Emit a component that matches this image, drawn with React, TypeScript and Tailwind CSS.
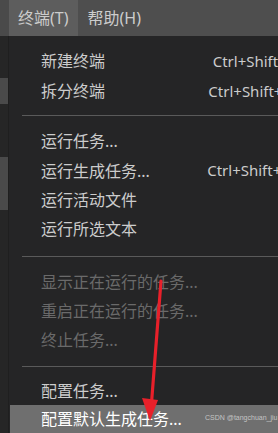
import React from "react";

const font = { fontFamily: '"Noto Sans", "Noto Sans CJK SC", sans-serif' };

type Item = { label: string; shortcut?: string; disabled?: boolean; active?: boolean; h: string };

function Row({ label, shortcut, disabled, active, h }: Item) {
  return (
    <div
      className={`flex items-center justify-between pl-[31px] pr-[18px] text-[16px] leading-none whitespace-nowrap ${h} ${
        active ? "bg-[#6f6f6f] text-white" : disabled ? "text-[#6a6a6a]" : "text-[#cccccc]"
      }`}
    >
      <span>{label}</span>
      {shortcut && <span className="text-[15px]">{shortcut}</span>}
    </div>
  );
}

function Sep({ pad }: { pad: string }) {
  return (
    <div className={`pl-[12px] ${pad}`}>
      <div className="h-px bg-[#5a5a5a]" />
    </div>
  );
}

export default function App() {
  return (
    <div className="relative w-[278px] h-[433px] overflow-hidden bg-[#252526]" style={font}>
      {/* top menubar */}
      <div className="flex h-[36px] bg-[#4e4e4e] text-[#cccccc] text-[16px]">
        <div className="w-[9px] shrink-0 bg-[#4a4a4a]" />
        <div className="flex items-center px-[9px] bg-[#5d5d5d]">终端(T)</div>
        <div className="flex items-center px-[10px]">帮助(H)</div>
      </div>
      <div className="flex h-[397px]">
        {/* left strip */}
        <div className="w-[9px] shrink-0 flex flex-col bg-[#262626] border-r border-[#1f1f1f]">
          <div className="h-[42px]" />
          <div className="h-[26px] bg-[#4a4a4a]" />
          <div className="h-[53px]" />
          <div className="h-[53px] bg-[#4a4a4a]" />
        </div>
        {/* menu */}
        <div className="w-[300px] shrink-0 pl-px pt-[10px] bg-[#252526]">
          <Row label="新建终端" shortcut="Ctrl+Shift+`" h="h-[30px]" />
          <Row label="拆分终端" shortcut="Ctrl+Shift+5" h="h-[30px]" />
          <Sep pad="pt-[9px] pb-[10px]" />
          <Row label="运行任务..." h="h-[30px]" />
          <Row label="运行生成任务..." shortcut="Ctrl+Shift+B" h="h-[29px]" />
          <Row label="运行活动文件" h="h-[29px]" />
          <Row label="运行所选文本" h="h-[29px]" />
          <Sep pad="pt-[13px] pb-[10px]" />
          <Row label="显示正在运行的任务..." disabled h="h-[29px]" />
          <Row label="重启正在运行的任务..." disabled h="h-[29px]" />
          <Row label="终止任务..." disabled h="h-[29px]" />
          <Sep pad="pt-[12px] pb-[10px]" />
          <Row label="配置任务..." h="h-[28px]" />
          <Row label="配置默认生成任务..." active h="h-[28px]" />
        </div>
      </div>
      {/* watermark */}
      <div
        className="absolute left-[205px] top-[414px] text-[7px] leading-none text-[#c4c4c4] whitespace-nowrap"
        style={{ fontFamily: '"Liberation Sans", sans-serif' }}
      >
        CSDN @tangchuan_jiu
      </div>
      {/* red arrow */}
      <svg className="absolute left-0 top-0 pointer-events-none" width="278" height="433" viewBox="0 0 278 433">
        <line x1="161" y1="281" x2="151.5" y2="403" stroke="#e8202a" strokeWidth="3.2" strokeLinecap="round" />
        <polygon points="142,398 158,400 150,421" fill="#e8202a" />
      </svg>
    </div>
  );
}
